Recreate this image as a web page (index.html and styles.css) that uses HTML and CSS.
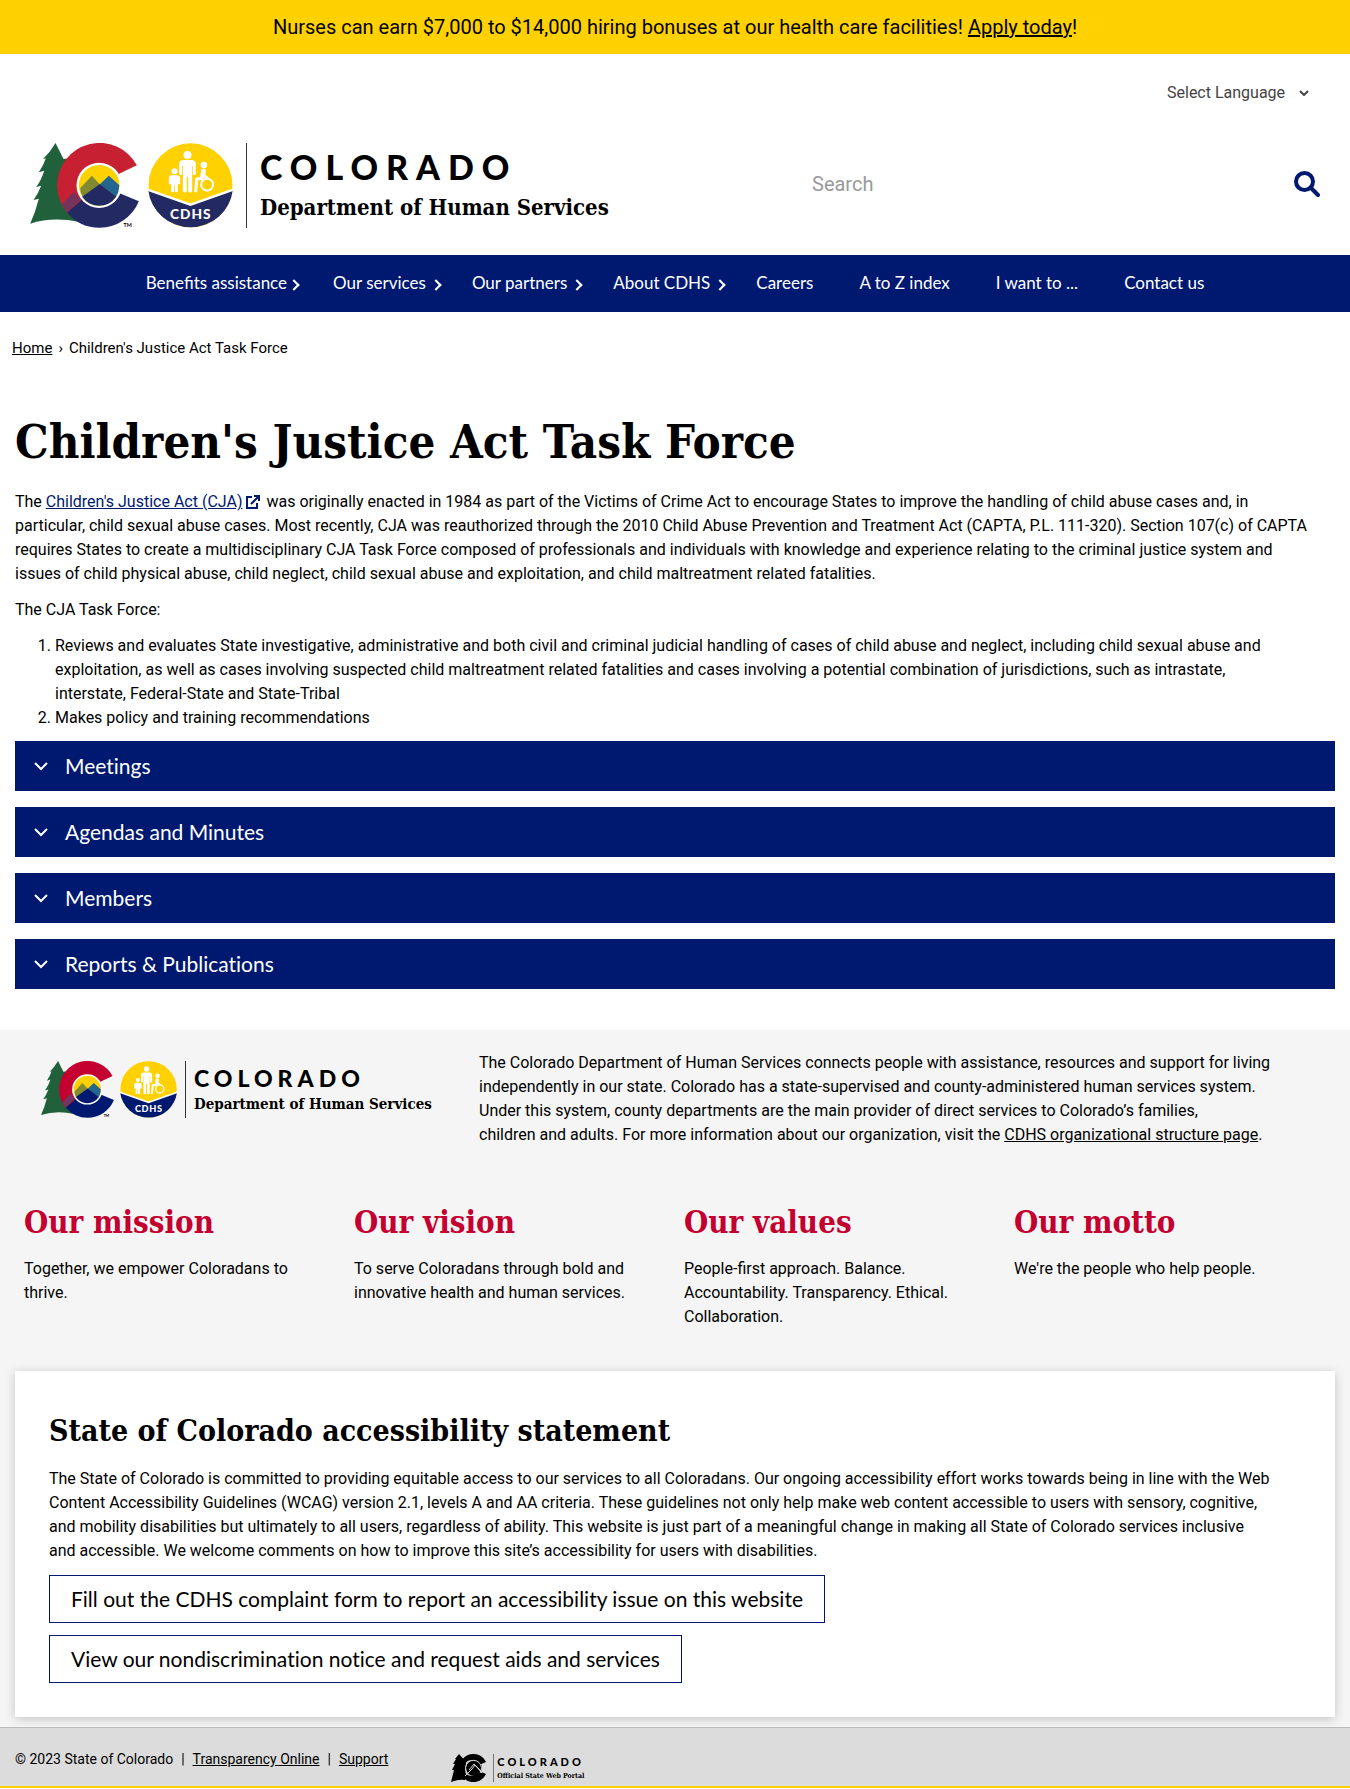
FILE: index.html
```html
<!DOCTYPE html>
<html lang="en">
<head>
<meta charset="utf-8">
<meta name="viewport" content="width=device-width, initial-scale=1">
<title>Children's Justice Act Task Force</title>
<link rel="stylesheet" href="styles.css">
</head>
<body>
<svg class="sprite" aria-hidden="true">
  <symbol id="marks" viewBox="32 38 608 255">
    <path class="tree" d="M108 38 Q92 66 70 87 L79 84 Q72 106 58 126 L74 121 Q65 150 50 170 L65 166 Q56 190 42 209 L58 205 Q48 245 32 280 Q100 258 180 275 L190 80 L132 86Z"/>
    <path class="c-red" d="M240 165 L302 129 L352 105 A127 127 0 0 0 113 165 A127 127 0 0 0 143 247Z"/>
    <path class="c-plum" d="M127 222 L163 185 L183 207 L143 247 Q133 236 127 222Z"/>
    <path class="c-blue" d="M143 247 L240 160 L304 190 L358 213 A127 127 0 0 1 240 292 A127 127 0 0 1 143 247Z"/>
    <circle class="ring" cx="239" cy="165" r="68"/>
    <circle class="c-gold" cx="239" cy="165" r="61"/>
    <path class="c-olive" d="M182 174 L217 136 L241 162 L192 204 Q182 190 182 174Z"/>
    <path class="c-teal" d="M241 162 L268 136 L299 164 Q299 185 289 200Z"/>
    <path class="c-blue" d="M188 199 L241 161 L290 199 A61 61 0 0 1 188 199Z"/>
    <text class="tm" x="312" y="290">TM</text>
    <circle class="c-gold" cx="513" cy="165" r="126"/>
    <path class="c-blue" d="M386 179 L513 223 L640 179 A128 128 0 0 1 386 179Z"/>
    <path class="chev" d="M384 178 L513 223 L642 178"/>
    <g class="folk">
      <circle cx="504" cy="74" r="12"/>
      <path d="M490 89 H518 Q529 90 529 102 V132 Q524 137 520 132 V106 H518 V183 Q511 190 506 183 V140 H502 V183 Q496 190 490 183 V106 H488 V132 Q484 137 479 132 V102 Q479 90 490 89Z"/>
      <circle cx="465" cy="123" r="9"/>
      <path d="M457 135 H474 Q482 136 482 145 V160 Q478 164 475 160 V184 Q470 188 466 184 V165 H464 V184 Q459 188 455 184 V160 Q450 164 448 160 V145 Q448 136 457 135Z"/>
      <circle cx="553" cy="104" r="10"/>
      <path d="M545 117 Q552 113 559 119 L558 134 L568 141 L565 147 L551 143 V150 H536 L533 184 Q527 188 524 184 L527 145 Q528 141 535 141 L542 140Z"/>
      <circle class="wheel" cx="563" cy="163" r="18"/>
    </g>
    <text class="cdhs" x="514" y="266">CDHS</text>
  </symbol>
</svg>

<div class="banner">Nurses can earn $7,000 to $14,000 hiring bonuses at our health care facilities! <a href="#">Apply today</a>!</div>

<header class="header">
  <div class="lang">
    <label class="hidden" for="lang">Language</label>
    <select id="lang"><option>Select Language</option></select>
    <svg width="10" height="6" viewBox="0 0 10 6"><path d="M1 1l4 4 4-4"/></svg>
  </div>
  <div class="masthead">
    <a class="logo" href="#">
      <svg class="logo-marks" role="img" aria-label="Colorado CDHS"><use href="#marks"/></svg>
      <span class="logo-text"><span class="logo-state">COLORADO</span><span class="logo-dept">Department of Human Services</span></span>
    </a>
    <form class="search">
      <input type="search" placeholder="Search" aria-label="Search">
      <button type="button" aria-label="Submit search"><svg width="26" height="26" viewBox="0 0 26 26"><circle cx="10.500" cy="10.500" r="8.500"/><path d="M17 17l7 7"/></svg></button>
    </form>
  </div>
</header>

<nav class="nav">
  <ul>
    <li class="more"><a href="#">Benefits assistance</a></li>
    <li class="more"><a href="#">Our services</a></li>
    <li class="more"><a href="#">Our partners</a></li>
    <li class="more"><a href="#">About CDHS</a></li>
    <li><a href="#">Careers</a></li>
    <li><a href="#">A to Z index</a></li>
    <li><a href="#">I want to ...</a></li>
    <li><a href="#">Contact us</a></li>
  </ul>
</nav>

<div class="crumbs"><a href="#">Home</a><span>›</span><span>Children's Justice Act Task Force</span></div>

<main class="main">
  <h1>Children's Justice Act Task Force</h1>
  <p>The <a class="ext" href="#">Children's Justice Act (CJA)<svg width="14" height="14" viewBox="0 0 14 14"><path d="M6 2H1v11h10V8M8 1h5v5M13 1L5 9"/></svg></a> was originally enacted in 1984 as part of the Victims of Crime Act to encourage States to improve the handling of child abuse cases and, in<br> particular, child sexual abuse cases. Most recently, CJA was reauthorized through the 2010 Child Abuse Prevention and Treatment Act (CAPTA, P.L. 111-320). Section 107(c) of CAPTA<br> requires States to create a multidisciplinary CJA Task Force composed of professionals and individuals with knowledge and experience relating to the criminal justice system and<br> issues of child physical abuse, child neglect, child sexual abuse and exploitation, and child maltreatment related fatalities.</p>
  <p>The CJA Task Force:</p>
  <ol>
    <li>Reviews and evaluates State investigative, administrative and both civil and criminal judicial handling of cases of child abuse and neglect, including child sexual abuse and<br> exploitation, as well as cases involving suspected child maltreatment related fatalities and cases involving a potential combination of jurisdictions, such as intrastate,<br> interstate, Federal-State and State-Tribal</li>
    <li>Makes policy and training recommendations</li>
  </ol>
  <div class="accordion">
    <details><summary><svg width="16" height="10" viewBox="0 0 16 10"><path d="M2 2l6 6 6-6"/></svg>Meetings</summary></details>
    <details><summary><svg width="16" height="10" viewBox="0 0 16 10"><path d="M2 2l6 6 6-6"/></svg>Agendas and Minutes</summary></details>
    <details><summary><svg width="16" height="10" viewBox="0 0 16 10"><path d="M2 2l6 6 6-6"/></svg>Members</summary></details>
    <details><summary><svg width="16" height="10" viewBox="0 0 16 10"><path d="M2 2l6 6 6-6"/></svg>Reports &amp; Publications</summary></details>
  </div>
</main>

<footer>
  <div class="about">
    <div class="about-row">
      <a class="logo logo-small" href="#">
        <svg class="logo-marks" role="img" aria-label="Colorado CDHS"><use href="#marks"/></svg>
        <span class="logo-text"><span class="logo-state">COLORADO</span><span class="logo-dept">Department of Human Services</span></span>
      </a>
      <p>The Colorado Department of Human Services connects people with assistance, resources and support for living<br> independently in our state. Colorado has a state-supervised and county-administered human services system.<br> Under this system, county departments are the main provider of direct services to Colorado’s families,<br> children and adults. For more information about our organization, visit the <a href="#">CDHS organizational structure page</a>.</p>
    </div>
    <div class="pillars">
      <section><h2>Our mission</h2><p>Together, we empower Coloradans to thrive.</p></section>
      <section><h2>Our vision</h2><p>To serve Coloradans through bold and innovative health and human services.</p></section>
      <section><h2>Our values</h2><p>People-first approach. Balance. Accountability. Transparency. Ethical. Collaboration.</p></section>
      <section><h2>Our motto</h2><p>We're the people who help people.</p></section>
    </div>
    <section class="card">
      <h2>State of Colorado accessibility statement</h2>
      <p>The State of Colorado is committed to providing equitable access to our services to all Coloradans. Our ongoing accessibility effort works towards being in line with the Web<br> Content Accessibility Guidelines (WCAG) version 2.1, levels A and AA criteria. These guidelines not only help make web content accessible to users with sensory, cognitive,<br> and mobility disabilities but ultimately to all users, regardless of ability. This website is just part of a meaningful change in making all State of Colorado services inclusive<br> and accessible. We welcome comments on how to improve this site’s accessibility for users with disabilities.</p>
      <a class="btn" href="#">Fill out the CDHS complaint form to report an accessibility issue on this website</a>
      <a class="btn" href="#">View our nondiscrimination notice and request aids and services</a>
    </section>
  </div>
  <div class="legal">
    <div class="legal-links"><span>© 2023 State of Colorado</span><span>|</span><a href="#">Transparency Online</a><span>|</span><a href="#">Support</a></div>
    <a class="portal" href="#">
      <svg width="36" height="28" viewBox="0 0 36 28" role="img" aria-label="State of Colorado">
        <path d="M8 0L4 5h1L2 10h2L1 16h2L0 28Q8 25 14 26L15 8Z"/>
        <path d="M35 8A14 14 0 1 0 35 20L28 17A8 8 0 1 1 28 11Z"/>
        <circle cx="23" cy="14" r="8"/>
        <path class="line" d="M14 22l7-7 3-4 6 6M18 16l5-6 8 9M16 19a8 8 0 1 1 13 0"/>
      </svg>
      <span class="portal-text"><span class="portal-state">COLORADO</span><span class="portal-sub">Official State Web Portal</span></span>
    </a>
  </div>
</footer>
</body>
</html>
```
FILE: styles.css
```css
* { box-sizing: border-box; }

:root {
  --navy: #001970;
  --text: Roboto, "Open Sans", sans-serif;
  --sans: Lato, "Open Sans", sans-serif;
  --slab: "DejaVu Serif Condensed", "DejaVu Serif", serif;
}

body {
  margin: 0;
  background: #fff;
  color: #000;
  font: 16px/24px var(--text);
}

a { color: inherit; }
p { margin: 0; }
h1, h2 { font-family: var(--slab); font-weight: 700; margin: 0; }
ul { list-style: none; margin: 0; padding: 0; }

.sprite { display: block; width: 0; height: 0; }
.hidden {
  position: absolute;
  width: 1px;
  height: 1px;
  overflow: hidden;
  clip-path: inset(50%);
}

.banner {
  background: #ffd100;
  padding: 12px 16px;
  min-height: 54px;
  text-align: center;
  font-size: 20px;
  line-height: 30px;
}

/* Header */
.header { padding: 21px 30px 27px; }
.lang {
  display: flex;
  align-items: center;
  justify-content: flex-end;
  gap: 13px;
  height: 36px;
  padding-right: 11px;
}
.lang select {
  appearance: none;
  border: 0;
  background: none;
  padding: 0;
  color: #444;
  font: 16px/24px var(--text);
}
.lang path { fill: none; stroke: #444; stroke-width: 2; }
.masthead {
  display: flex;
  align-items: center;
  justify-content: space-between;
  padding-top: 32px;
}

.logo {
  --red: #c72033;
  --blue: #232a63;
  display: flex;
  align-items: center;
  text-decoration: none;
  color: #000;
}
.logo-marks { width: 203px; height: 85px; margin-right: 13px; }
.logo-text {
  display: flex;
  flex-direction: column;
  justify-content: center;
  gap: 7px;
  height: 85px;
  border-left: 1px solid #333;
  padding-left: 13px;
  white-space: nowrap;
}
.logo-state { font: 900 34px/36px var(--sans); letter-spacing: 8px; }
.logo-dept { font: 700 22px/30px var(--slab); }
.tree { fill: #20603a; }
.c-red { fill: var(--red); }
.c-plum { fill: #75345c; }
.c-blue { fill: var(--blue); }
.c-gold { fill: #ffd100; }
.c-olive { fill: #808a30; }
.c-teal { fill: #23668f; }
.ring { fill: #fff; }
.chev { fill: none; stroke: #fff; stroke-width: 7; }
.folk { fill: #fff; }
.wheel { fill: none; stroke: #fff; stroke-width: 6; }
.tm { font: 700 16px var(--sans); }
.cdhs { fill: #fff; font: 900 41px var(--sans); letter-spacing: 3px; text-anchor: middle; }

.search { display: flex; align-items: center; width: 508px; padding-bottom: 4px; }
.search input {
  flex: 1;
  min-width: 0;
  border: 0;
  padding: 0;
  font: 20px/24px var(--text);
}
.search input::placeholder { color: #999; }
.search button { border: 0; background: none; padding: 0; display: flex; }
.search svg { fill: none; stroke: var(--navy); stroke-width: 4; stroke-linecap: round; }

/* Navigation */
.nav { background: var(--navy); color: #fff; }
.nav ul { display: flex; justify-content: center; }
.nav li { position: relative; }
.nav a { display: block; padding: 16px 23px 17px; text-decoration: none; font: 17px/24px var(--sans); }
.more::after {
  content: "";
  position: absolute;
  right: 9px;
  top: 26px;
  width: 6px;
  height: 6px;
  border: solid #fff;
  border-width: 2px 2px 0 0;
  transform: rotate(45deg);
}
.more:first-child::after { right: 12px; }

.crumbs { display: flex; gap: 6px; padding: 24px 12px; font-size: 15px; }

/* Content */
.main { padding: 26px 15px 41px; }
.main h1 { font-size: 47px; line-height: 60px; padding: 2px 0 18px; }
.main p { margin-bottom: 12px; }
.main ol { margin: 0 0 11px; padding-left: 40px; }
.ext { color: var(--navy); }
.ext svg { margin: 0 2px 0 4px; vertical-align: -2px; fill: none; stroke: var(--navy); stroke-width: 2; }
.accordion { display: grid; gap: 16px; }
.accordion summary {
  display: flex;
  align-items: center;
  gap: 16px;
  min-height: 50px;
  padding: 10px 18px;
  background: var(--navy);
  color: #fff;
  font: 21px/24px var(--sans);
  font-variant-ligatures: none;
  list-style: none;
}
.accordion path { fill: none; stroke: #fff; stroke-width: 2; }

/* Footer */
.about { background: #f5f5f5; padding: 21px 15px 10px; }
.about-row { display: flex; align-items: flex-start; padding: 0 45px 0 26px; }
.about-row p { flex: 1; }
.logo-small { --red: #c3002f; --blue: #001970; width: 438px; padding-top: 10px; }
.logo-small .logo-marks { width: 136px; height: 57px; margin-right: 8px; }
.logo-small .logo-text { height: 57px; gap: 4px; padding-left: 8px; }
.logo-small .logo-state { font-size: 23px; line-height: 24px; letter-spacing: 5px; }
.logo-small .logo-dept { font-size: 15px; line-height: 20px; }
.pillars {
  display: grid;
  grid-template-columns: repeat(4, 1fr);
  padding: 53px 0 42px;
}
.pillars section { padding: 0 28px 0 9px; }
.pillars h2 { color: #c3002f; font-size: 31px; line-height: 40px; padding: 2px 0 15px; }
.card { background: #fff; padding: 40px 34px 34px; box-shadow: 0 2px 10px #0003; }
.card h2 { font-size: 30px; line-height: 40px; margin-bottom: 16px; }
.card .btn {
  display: block;
  width: fit-content;
  margin-top: 12px;
  padding: 11px 21px;
  border: 1px solid var(--navy);
  font: 21px/24px var(--sans);
  font-variant-ligatures: none;
  text-decoration: none;
}
.legal {
  display: flex;
  align-items: flex-start;
  gap: 63px;
  padding: 19px 15px 4px;
  background: #dcdcdc;
  border-top: 1px solid #bbb;
  border-bottom: 2px solid #ffd100;
}
.legal-links { display: flex; gap: 8px; font-size: 14px; }
.portal { display: flex; gap: 6px; padding-top: 7px; color: #000; text-decoration: none; }
.portal .line { fill: none; stroke: #dcdcdc; stroke-width: 1; }
.portal-text { display: flex; flex-direction: column; border-left: 1px solid #777; padding-left: 3px; }
.portal-state { font: 900 11px/16px var(--sans); letter-spacing: 3px; }
.portal-sub { font: 700 7px/12px var(--slab); }
```
